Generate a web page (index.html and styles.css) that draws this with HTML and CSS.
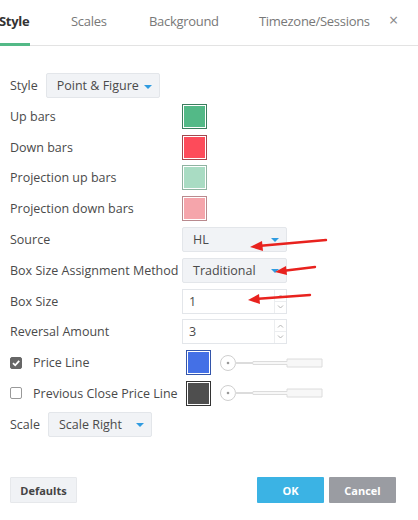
FILE: index.html
```html
<!DOCTYPE html>
<html>
<head>
<meta charset="utf-8">
<link rel="stylesheet" href="styles.css">
</head>
<body>
<div class="dialog">
  <div class="tabs">
    <div class="tab t1 active"><span>Style</span></div>
    <div class="tab t2"><span>Scales</span></div>
    <div class="tab t3"><span>Background</span></div>
    <div class="tab t4"><span>Timezone/Sessions</span></div>
    <div class="close">×</div>
  </div>
  <div class="content">
    <div class="row inline">
      <span class="label">Style</span>
      <div class="select w114"><span>Point &amp; Figure</span><i class="caret"></i></div>
    </div>
    <div class="row grid"><span class="label">Up bars</span><div class="swatch up"></div></div>
    <div class="row grid"><span class="label">Down bars</span><div class="swatch down"></div></div>
    <div class="row grid"><span class="label">Projection up bars</span><div class="swatch pup"></div></div>
    <div class="row grid"><span class="label">Projection down bars</span><div class="swatch pdown"></div></div>
    <div class="row grid"><span class="label">Source</span><div class="select w105"><span>HL</span><i class="caret"></i></div></div>
    <div class="row grid"><span class="label">Box Size Assignment Method</span><div class="select w105"><span>Traditional</span><i class="caret"></i></div></div>
    <div class="row grid"><span class="label">Box Size</span><div class="num"><span class="val">1</span><span class="spin"><svg width="11" height="23" viewBox="0 0 11 23"><path d="M3 7.5 L5.5 5 L8 7.5" fill="none" stroke="#b5b5b5"/><path d="M0 11.5 H11" stroke="#eceef0"/><path d="M3 15.5 L5.5 18 L8 15.5" fill="none" stroke="#b5b5b5"/></svg></span></div></div>
    <div class="row grid"><span class="label">Reversal Amount</span><div class="num"><span class="val">3</span><span class="spin"><svg width="11" height="23" viewBox="0 0 11 23"><path d="M3 7.5 L5.5 5 L8 7.5" fill="none" stroke="#b5b5b5"/><path d="M0 11.5 H11" stroke="#eceef0"/><path d="M3 15.5 L5.5 18 L8 15.5" fill="none" stroke="#b5b5b5"/></svg></span></div></div>
    <div class="row grid2">
      <span class="label chk"><i class="box checked"><svg width="10" height="10" viewBox="0 0 10 10"><path d="M2 5.2 L4.2 7.3 L8.2 2.8" fill="none" stroke="#fff" stroke-width="1.8"/></svg></i>Price Line</span>
      <div class="swatch blue"></div>
      <svg class="slider" width="104" height="18" viewBox="0 0 104 18"><circle cx="8" cy="9" r="7.5" fill="#fff" stroke="#cfcfcf"/><circle cx="8" cy="9" r="1.3" fill="#999"/><path d="M15.5 8.5 H33 V7.5 H67 V5 H102 V13 H67 V10.5 H33 V9.5 H15.5 Z" fill="#f7f7f7" stroke="#dcdcdc"/></svg>
    </div>
    <div class="row grid2">
      <span class="label chk"><i class="box"></i>Previous Close Price Line</span>
      <div class="swatch dark"></div>
      <svg class="slider" width="104" height="18" viewBox="0 0 104 18"><circle cx="8" cy="9" r="7.5" fill="#fff" stroke="#cfcfcf"/><circle cx="8" cy="9" r="1.3" fill="#999"/><path d="M15.5 8.5 H33 V7.5 H67 V5 H102 V13 H67 V10.5 H33 V9.5 H15.5 Z" fill="#f7f7f7" stroke="#dcdcdc"/></svg>
    </div>
    <div class="row inline">
      <span class="label">Scale</span>
      <div class="select w104"><span>Scale Right</span><i class="caret"></i></div>
    </div>
  </div>
  <div class="footer">
    <button class="btn def">Defaults</button>
    <div class="right">
      <button class="btn ok">OK</button>
      <button class="btn cancel">Cancel</button>
    </div>
  </div>
  <svg class="arrows" width="418" height="520" viewBox="0 0 418 520">
    <g stroke="#e8221e" stroke-width="2.4" fill="#e8221e" stroke-linecap="round">
      <line x1="326" y1="240" x2="258" y2="246"/>
      <path d="M250 247 L262 241 L263 251 Z" stroke="none"/>
      <line x1="315" y1="267" x2="282" y2="271"/>
      <path d="M275 272 L286 266 L287 275 Z" stroke="none"/>
      <line x1="310" y1="295" x2="255" y2="299"/>
      <path d="M248 300 L259 294 L260 304 Z" stroke="none"/>
    </g>
  </svg>
</div>
</body>
</html>
```

FILE: styles.css
```css
* { box-sizing: border-box; }
html, body { margin: 0; padding: 0; background: #fff; }
body {
  font-family: "Open Sans", "Noto Sans", sans-serif;
  font-size: 12.5px;
  color: #4a4a4a;
  width: 418px;
  height: 520px;
  overflow: hidden;
}
.dialog { position: relative; width: 418px; height: 520px; }
.tabs {
  display: flex;
  height: 46px;
  border-bottom: 1px solid #e3e3e3;
  position: relative;
}
.tab {
  font-size: 13px;
  letter-spacing: -0.3px;
  color: #787878;
  height: 46px;
  white-space: nowrap;
}
.tab span {
  display: inline-block;
  height: 46px;
  line-height: 42px;
  border-bottom: 3px solid transparent;
}
.t1 { width: 72px; margin-left: -1px; }
.t2 { width: 78px; }
.t3 { width: 110px; }
.t4 { width: 120px; }
.tab.active { color: #333; font-weight: 700; }
.tab.active span { border-bottom-color: #53b987; padding-right: 1px; }
.close {
  position: absolute;
  left: 389px;
  top: 9px;
  font-size: 16px;
  color: #888;
}
.content {
  padding: 27px 0 0 10px;
  display: flex;
  flex-direction: column;
  gap: 5.8px;
}
.row { height: 25px; display: flex; align-items: center; }
.row.inline .label { margin-right: 8px; }
.row.grid .label { width: 172px; }
.row.grid2 .label { width: 176px; }
.select {
  height: 25px;
  background: #f1f3f6;
  border: 1px solid #e3e6ea;
  border-radius: 2px;
  display: flex;
  align-items: center;
  justify-content: space-between;
  padding: 0 7px 0 10px;
  color: #4a4a4a;
}
.w114 { width: 114px; }
.w105 { width: 105px; }
.w104 { width: 104px; }
.caret {
  width: 0; height: 0;
  border-left: 4px solid transparent;
  border-right: 4px solid transparent;
  border-top: 4px solid #2f9be0;
  margin-top: 2px;
}
.swatch {
  width: 25px; height: 25px;
  border: 1px solid #444;
  box-shadow: inset 0 0 0 1px #fff;
}
.swatch.up { background: #53b987; border-color: #3b7e5e; }
.swatch.down { background: #fd4b5a; border-color: #a3474e; }
.swatch.pup { background: #a9dcc3; border-color: #8fb3a1; }
.swatch.pdown { background: #f5a5ab; border-color: #b98a8e; }
.swatch.blue { background: #4470e6; border-color: #3355aa; }
.swatch.dark { background: #4e4e4e; border-color: #333; }
.num {
  width: 105px; height: 25px;
  border: 1px solid #e3e6ea;
  display: flex;
  justify-content: space-between;
  background: #fff;
}
.num .val { padding-left: 6px; line-height: 23px; }
.spin {
  width: 12px;
  border-left: 1px solid #eceef0;
  display: flex;
}
.chk { display: flex; align-items: center; }
.box {
  width: 12px; height: 12px;
  border: 1px solid #999;
  border-radius: 2px;
  margin-right: 11px;
  display: flex; align-items: center; justify-content: center;
}
.box.checked { background: #666; border-color: #666; }
.slider { margin-left: 9px; }
.footer {
  position: absolute;
  left: 10px; right: 22px; top: 477px;
  display: flex;
  justify-content: space-between;
}
.right { display: flex; gap: 5px; }
.btn {
  height: 26px;
  width: 67px;
  border: none;
  border-radius: 1px;
  font-family: "Open Sans", "Noto Sans", sans-serif;
  font-size: 11px;
  font-weight: 700;
  padding: 0;
}
.btn.def { background: #f0f2f5; color: #444; border: 1px solid #e6e8eb; }
.btn.ok { background: #3bb3e4; color: #fff; }
.btn.cancel { background: #9a9ca2; color: #fff; }
.arrows { position: absolute; left: 0; top: 0; pointer-events: none; }
```
